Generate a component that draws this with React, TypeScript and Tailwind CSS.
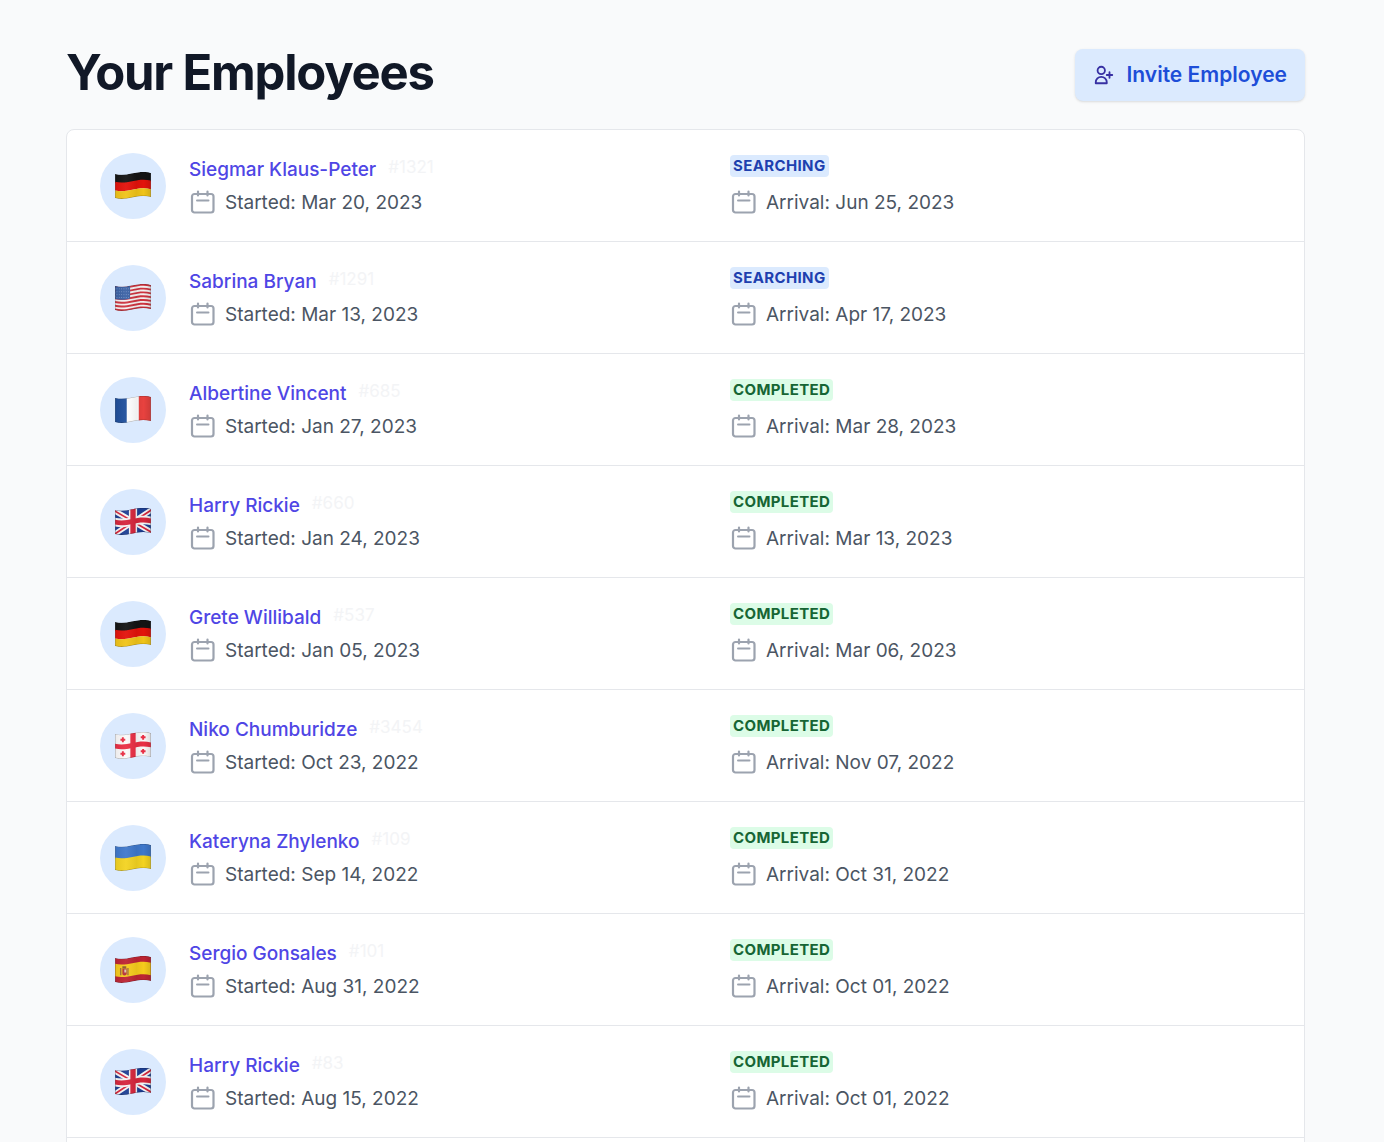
import type { ReactNode } from 'react';
import { HiOutlineUserAdd } from 'react-icons/hi';

type Country = 'de' | 'us' | 'fr' | 'gb' | 'ge' | 'ua' | 'es';
type Status = 'searching' | 'completed';

interface Employee {
  id: number;
  name: string;
  country: Country;
  status: Status;
  started: string;
  arrival: string;
}

const employees: Employee[] = [
  { id: 1321, name: 'Siegmar Klaus-Peter', country: 'de', status: 'searching', started: 'Mar 20, 2023', arrival: 'Jun 25, 2023' },
  { id: 1291, name: 'Sabrina Bryan', country: 'us', status: 'searching', started: 'Mar 13, 2023', arrival: 'Apr 17, 2023' },
  { id: 685, name: 'Albertine Vincent', country: 'fr', status: 'completed', started: 'Jan 27, 2023', arrival: 'Mar 28, 2023' },
  { id: 660, name: 'Harry Rickie', country: 'gb', status: 'completed', started: 'Jan 24, 2023', arrival: 'Mar 13, 2023' },
  { id: 537, name: 'Grete Willibald', country: 'de', status: 'completed', started: 'Jan 05, 2023', arrival: 'Mar 06, 2023' },
  { id: 3454, name: 'Niko Chumburidze', country: 'ge', status: 'completed', started: 'Oct 23, 2022', arrival: 'Nov 07, 2022' },
  { id: 109, name: 'Kateryna Zhylenko', country: 'ua', status: 'completed', started: 'Sep 14, 2022', arrival: 'Oct 31, 2022' },
  { id: 101, name: 'Sergio Gonsales', country: 'es', status: 'completed', started: 'Aug 31, 2022', arrival: 'Oct 01, 2022' },
  { id: 83, name: 'Harry Rickie', country: 'gb', status: 'completed', started: 'Aug 15, 2022', arrival: 'Oct 01, 2022' },
];

const statusStyles: Record<Status, string> = {
  searching: 'bg-[#dbeafe] text-[#1e40af]',
  completed: 'bg-[#dcfce7] text-[#166534]',
};

// A horizontal band that follows the wave of the cloth, from y to y + h
const Band = ({ y, h, fill }: { y: number; h: number; fill: string }) => (
  <path
    d={`M0 ${y} C14 ${y + 3.5} 23 ${y - 5} 38 ${y - 1} V${y + h - 1} C23 ${y + h - 5} 14 ${y + h + 3.5} 0 ${y + h} Z`}
    fill={fill}
  />
);

const cloth = 'M0.500 2C14 5.500 23 -3 37.500 1V26C23 22 14 30.500 0.500 27Z';

const flags: Record<Country, ReactNode> = {
  de: (
    <>
      <Band y={2} h={9} fill="#141414" />
      <Band y={10} h={9} fill="#e3120b" />
      <Band y={19} h={8} fill="#f0c419" />
    </>
  ),
  us: (
    <>
      <Band y={2} h={25} fill="#f5f1f1" />
      {[0, 1, 2, 3, 4, 5, 6].map((n) => (
        <Band key={n} y={2 + n * 3.9} h={2} fill="#cf3440" />
      ))}
      <path d="M0 1C6 3.500 11 3 16 1.500V15C11 16.500 6 17 0 15.500Z" fill="#3c62a5" />
      {[5, 8, 11, 14].map((y) => (
        <path key={y} d={`M2 ${y}H15`} stroke="#8fa8d6" strokeWidth="0.800" strokeDasharray="0.8 1.6" />
      ))}
    </>
  ),
  fr: (
    <>
      <path d="M0 0H13V29H0Z" fill="#1f4f9c" />
      <path d="M12.500 0H25V29H12.500Z" fill="#fff" />
      <path d="M25 0H38V29H25Z" fill="#e8423f" />
    </>
  ),
  gb: (
    <>
      <path d="M0 0H38V29H0Z" fill="#1d3f94" />
      <path d="M0 3L38 25M0 27L38 2" stroke="#f5f5f5" strokeWidth="5.500" />
      <path d="M0 3L38 25M0 27L38 2" stroke="#d6263c" strokeWidth="1.800" />
      <Band y={10} h={9} fill="#f5f5f5" />
      <path d="M19 0V29" stroke="#f5f5f5" strokeWidth="8.500" />
      <Band y={12} h={5} fill="#d6263c" />
      <path d="M19 0V29" stroke="#d6263c" strokeWidth="5.500" />
    </>
  ),
  ge: (
    <>
      <path d="M0 0H38V29H0Z" fill="#fbf9f9" />
      <Band y={12} h={5} fill="#ea2f45" />
      <path d="M19 0V29" stroke="#ea2f45" strokeWidth="5.500" />
      <path
        d="M8.500 5.500V10.500M6 8H11M29.500 3V8M27 5.500H32M8.500 20V25M6 22.500H11M29.500 17.500V22.500M27 20H32"
        stroke="#ea2f45"
        strokeWidth="2"
      />
    </>
  ),
  ua: (
    <>
      <Band y={2} h={13} fill="#3f78cb" />
      <Band y={14} h={13} fill="#f3d321" />
    </>
  ),
  es: (
    <>
      <Band y={2} h={25} fill="#bd2433" />
      <Band y={8} h={13} fill="#f6cb1c" />
      <path d="M5.500 12.500H7V20H5.500ZM13 12.500H14.500V20H13Z" fill="#a4703c" />
      <path d="M8 13H12.500V19Q10 21.500 8 19Z" fill="#b5333a" />
      <path d="M8 10.500H12V13H8Z" fill="#8d5b2c" />
      <path d="M10 14H12V17H10Z" fill="#d9c7b0" />
    </>
  ),
};

const Flag = ({ country }: { country: Country }) => {
  const clipId = `wave-${country}`;
  return (
    <svg viewBox="0 0 38 29" className="w-[38px] h-7" aria-hidden="true">
      <defs>
        <clipPath id={clipId}>
          <path d={cloth} />
        </clipPath>
        <linearGradient id={`${clipId}-shade`}>
          <stop offset="0" stopColor="#000" stopOpacity="0.060" />
          <stop offset="0.300" stopColor="#fff" stopOpacity="0.050" />
          <stop offset="0.600" stopColor="#000" stopOpacity="0.060" />
          <stop offset="0.800" stopColor="#000" stopOpacity="0" />
          <stop offset="1" stopColor="#000" stopOpacity="0.120" />
        </linearGradient>
      </defs>
      <g clipPath={`url(#${clipId})`}>
        {flags[country]}
        <path d={cloth} fill={`url(#${clipId}-shade)`} stroke="#000" strokeOpacity="0.300" />
      </g>
    </svg>
  );
};

const CalendarIcon = () => (
  <svg
    viewBox="0 0 28 28"
    className="size-7 shrink-0 text-[#9ca3af]"
    fill="none"
    stroke="currentColor"
    strokeWidth="2.200"
    strokeLinecap="round"
    strokeLinejoin="round"
    aria-hidden="true"
  >
    <rect x="3" y="5" width="21.500" height="18.500" rx="2.500" />
    <path d="M9 2.500V6.500M18.500 2.500V6.500" />
    <path d="M8 11.500H19.500" strokeWidth="2" />
  </svg>
);

const EmployeeRow = ({ employee }: { employee: Employee }) => (
  <li className="flex items-center h-28 px-[33px] border-b border-gray-200">
    <div className="size-[66px] shrink-0 rounded-full bg-[#dbeafe] flex items-center justify-center">
      <Flag country={employee.country} />
    </div>

    <div className="grid grid-cols-2 flex-1 pl-[23px]">
      <div>
        <div className="flex items-start gap-3 h-7">
          <a href="#" className="text-[19px] leading-[30px] font-medium text-[#4f46e5]">{employee.name}</a>
          <span className="text-[17px] leading-6 text-[#f3f4f6]">#{employee.id}</span>
        </div>
        <p className="flex items-center gap-2 mt-[6px] text-[19px] leading-7 text-[#4b5563]">
          <CalendarIcon />
          Started: {employee.started}
        </p>
      </div>

      <div>
        <div className="flex items-start h-7">
          <span className={`rounded-sm px-[3px] text-[15px] leading-[22px] font-bold tracking-wide uppercase ${statusStyles[employee.status]}`}>
            {employee.status}
          </span>
        </div>
        <p className="flex items-center gap-2 mt-[6px] text-[19px] leading-7 text-[#4b5563]">
          <CalendarIcon />
          Arrival: {employee.arrival}
        </p>
      </div>
    </div>
  </li>
);

export default function App() {
  return (
    <div className="h-screen overflow-hidden bg-[#f9fafb] pl-[66px] pr-[79px] pt-[49px] font-['Inter',sans-serif]">

      {/* Header */}
      <div className="flex items-start justify-between">
        <h1 className="text-[49px] leading-[48px] font-bold tracking-tight text-[#111827]">Your Employees</h1>
        <button
          type="button"
          className="flex items-center gap-3 h-[52px] px-[18px] rounded-lg bg-[#dbeafe] text-[21px] font-semibold text-[#1d4ed8] shadow-sm"
        >
          <HiOutlineUserAdd size={22} className="text-[#3730a3]" />
          Invite Employee
        </button>
      </div>

      {/* Employee list */}
      <ul className="mt-7 pb-8 bg-white border border-gray-200 rounded-lg">
        {employees.map((employee) => (
          <EmployeeRow key={employee.id} employee={employee} />
        ))}
      </ul>
    </div>
  );
}
